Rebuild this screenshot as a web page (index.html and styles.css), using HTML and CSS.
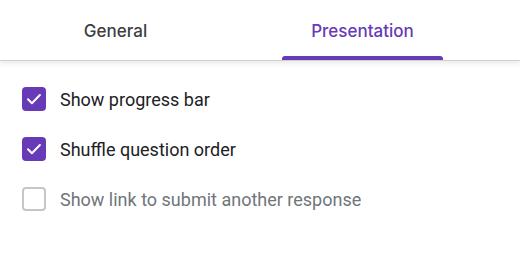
FILE: index.html
```html
<!DOCTYPE html>
<html>
<head>
<meta charset="utf-8">
<link rel="stylesheet" href="styles.css">
</head>
<body>
<div class="tabs">
  <div class="tab">General</div>
  <div class="tab active">Presentation</div>
</div>
<div class="options">
  <label class="option">
    <span class="box checked"><svg viewBox="0 0 24 24" width="24" height="24"><path d="M6 12.3l3.9 3.9 8-8.2" fill="none" stroke="#fff" stroke-width="2" stroke-linecap="round" stroke-linejoin="round"/></svg></span>
    <span class="label">Show progress bar</span>
  </label>
  <label class="option">
    <span class="box checked"><svg viewBox="0 0 24 24" width="24" height="24"><path d="M6 12.3l3.9 3.9 8-8.2" fill="none" stroke="#fff" stroke-width="2" stroke-linecap="round" stroke-linejoin="round"/></svg></span>
    <span class="label">Shuffle question order</span>
  </label>
  <label class="option">
    <span class="box"></span>
    <span class="label muted">Show link to submit another response</span>
  </label>
</div>
</body>
</html>
```
FILE: styles.css
```css
html, body {
  margin: 0;
  padding: 0;
  background: #fff;
  width: 520px;
  height: 260px;
  overflow: hidden;
  font-family: Roboto, "Liberation Sans", sans-serif;
}
.tabs {
  display: flex;
  gap: 86px;
  padding-left: 35px;
  height: 60px;
  border-bottom: 1px solid #d0d0d0;
  box-shadow: 0 3px 5px rgba(0,0,0,0.08);
  position: relative;
}
.tab {
  width: 161px;
  display: flex;
  align-items: center;
  justify-content: center;
  font-family: Inter, Roboto, sans-serif;
  font-size: 17px;
  font-weight: 500;
  color: #3c4043;
  box-sizing: border-box;
  padding-top: 2px;
  position: relative;
}
.tab.active {
  color: #673ab7;
}
.tab.active::after {
  content: "";
  position: absolute;
  left: 0;
  right: 0;
  bottom: 0;
  height: 4px;
  background: #673ab7;
  border-radius: 3px 3px 0 0;
}
.options {
  display: flex;
  flex-direction: column;
  gap: 26px;
  padding: 26px 0 0 22px;
}
.option {
  display: flex;
  align-items: center;
  gap: 14px;
  height: 24px;
}
.box {
  width: 24px;
  height: 24px;
  box-sizing: border-box;
  border-radius: 4px;
  border: 2px solid #c4c7c5;
  display: flex;
}
.box.checked {
  background: #673ab7;
  border: none;
}
.label {
  font-size: 18px;
  color: #202124;
}
.label.muted {
  color: #70757a;
}
```
